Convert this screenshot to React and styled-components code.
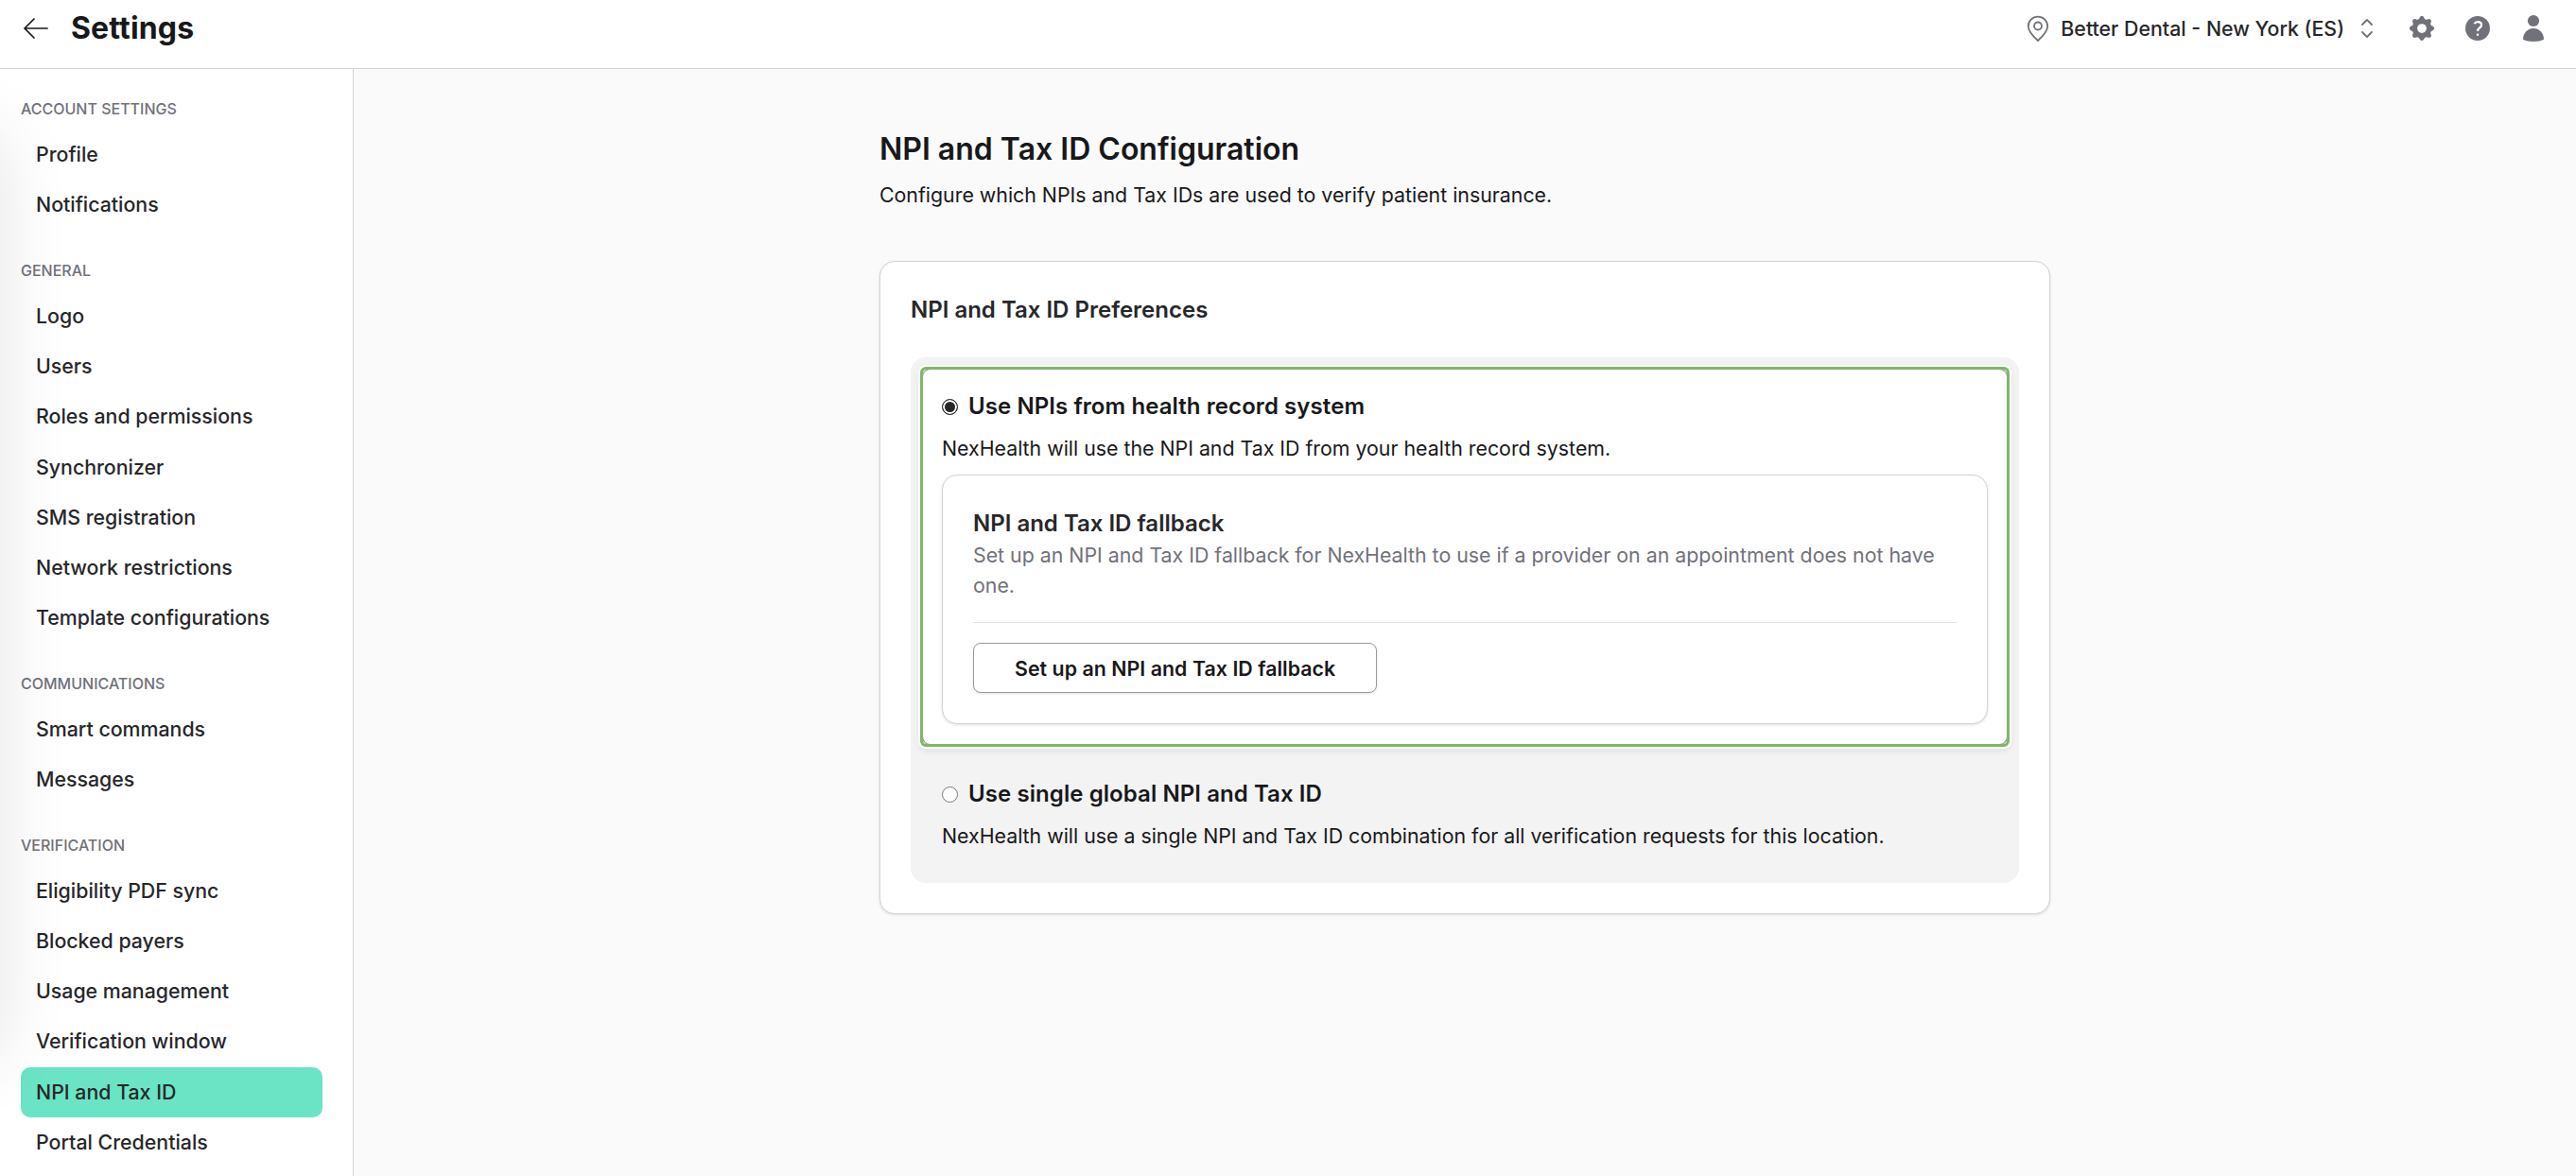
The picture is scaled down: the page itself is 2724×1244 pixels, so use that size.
import React from 'react';
import styled, { createGlobalStyle, css } from 'styled-components';

const colors = {
  ink: '#18181a',
  text: '#27272a',
  muted: '#71717a',
  line: '#d4d4d6',
  pageBg: '#fafafa',
  panelBg: '#f3f3f3',
  mint: '#6ae4c5',
  focus: '#82b46e',
};

const GlobalStyle = createGlobalStyle`
  * {
    box-sizing: border-box;
  }

  body {
    margin: 0;
    background: ${colors.pageBg};
    color: ${colors.ink};
    font-family: Inter, 'Liberation Sans', sans-serif;
  }

  h1, h2, h3, p {
    margin: 0;
  }
`;

const Page = styled.div`
  position: relative;
  display: flex;
  flex-direction: column;
  height: 1244px;
  overflow: hidden;
  background: ${colors.pageBg};

  /* soft shadow cast over the left edge of the sidebar */
  &::before {
    content: '';
    position: absolute;
    top: 140px;
    bottom: 125px;
    left: -200px;
    width: 200px;
    box-shadow: 0 0 76px rgba(0, 0, 0, 0.11);
    pointer-events: none;
    z-index: 1;
  }
`;

const Header = styled.header`
  display: flex;
  justify-content: space-between;
  align-items: center;
  flex: none;
  height: 73px;
  padding: 0 32px 12px 25px;
  background: white;
  border-bottom: 1px solid ${colors.line};
`;

const HeaderSide = styled.div`
  display: flex;
  align-items: center;
`;

const Title = styled.h1`
  margin-left: 24px;
  font-size: 32px;
  line-height: 40px;
  font-weight: 700;
  letter-spacing: 0.15px;
`;

const Location = styled.div`
  display: flex;
  align-items: center;
  margin-right: 38px;
  color: ${colors.muted};
`;

const LocationName = styled.span`
  margin: 0 17px 0 12px;
  color: ${colors.text};
  font-size: 21.33px;
  line-height: 32px;
  font-weight: 500;
`;

const Actions = styled.div`
  display: flex;
  align-items: center;
  gap: 33px;
  color: ${colors.muted};
`;

const Body = styled.div`
  display: flex;
  flex: 1;
  min-height: 0;
`;

const Sidebar = styled.nav`
  width: 374px;
  flex: none;
  padding: 26px 32px 0 22px;
  background: white;
  border-right: 1px solid ${colors.line};
`;

const Group = styled.section`
  margin-bottom: 26.2px;
`;

const GroupTitle = styled.h2`
  height: 38.2px;
  color: ${colors.muted};
  font-size: 16px;
  line-height: 32px;
  font-weight: 500;
  text-transform: uppercase;
`;

const Item = styled.div`
  height: 53.22px;
  padding: 0 16px;
  border-radius: 10px;
  color: ${colors.text};
  font-size: 21.33px;
  line-height: 52px;
  font-weight: 500;

  ${({ $active }) => $active && css`
    background: ${colors.mint};
  `}
`;

const Main = styled.main`
  flex: 1;
  display: flex;
  justify-content: center;
  padding-top: 64px;
`;

const Content = styled.div`
  width: 1238px;
`;

const PageTitle = styled.h2`
  font-size: 32px;
  line-height: 41px;
  font-weight: 600;
`;

const Text = styled.p`
  font-size: 21.33px;
  line-height: 32px;
`;

const Intro = styled(Text)`
  margin: 12px 0 54px;
`;

const Card = styled.section`
  padding: 32px;
  background: white;
  border: 1px solid ${colors.line};
  border-radius: 16px;
  box-shadow: 0 1px 3px rgba(0, 0, 0, 0.12);
`;

const CardTitle = styled.h3`
  margin-bottom: -2px;
  font-size: 24px;
  line-height: 38px;
  font-weight: 600;
  color: ${colors.text};
`;

const Options = styled.div`
  margin-top: 33px;
  padding: 10px;
  background: ${colors.panelBg};
  border-radius: 16px;
`;

const FocusRing = styled.div`
  overflow: hidden;
  border: 3px solid ${colors.focus};
  border-radius: 6px;
  background: #d5e5cd;
  box-shadow: 0 0 0 2px white, 0 3px 8px 1px rgba(0, 0, 0, 0.08);
`;

const Option = styled.div`
  padding: 33px 23px 24px;

  ${({ $selected }) => $selected && css`
    padding: 22px 20px 21px;
    border-radius: 8px;
    background: white;
    box-shadow: 0 0 0 1px #98989c;
  `}
`;

const OptionLabel = styled.label`
  display: flex;
  align-items: center;
  gap: 11px;
  margin-bottom: 11px;
  font-size: 24px;
  line-height: 34px;
  font-weight: 600;
  letter-spacing: 0.08px;
`;

const Radio = styled.span`
  width: 17px;
  height: 17px;
  border: 1px solid ${({ $checked }) => ($checked ? colors.text : '#767676')};
  border-radius: 50%;
  background: ${({ $checked }) => ($checked ? colors.text : 'white')};
  box-shadow: ${({ $checked }) => ($checked ? 'inset 0 0 0 2px white' : 'none')};
`;

const Fallback = styled(Card)`
  margin-top: 12px;
`;

const FallbackText = styled(Text)`
  color: ${colors.muted};
`;

const Divider = styled.hr`
  margin: 23px 0 21px;
  border: 0;
  border-top: 1px solid #e4e4e7;
`;

const Button = styled.button`
  display: block;
  height: 53px;
  padding: 0 43px;
  border: 1px solid #9a9aa3;
  border-radius: 8px;
  background: white;
  color: ${colors.ink};
  box-shadow: 0 1px 3px rgba(0, 0, 0, 0.12);
  font: 600 21.33px Inter, sans-serif;
  letter-spacing: 0.05px;
`;

// sidebar navigation, grouped as it is listed
const groups = [
  { title: 'Account settings', items: ['Profile', 'Notifications'] },
  {
    title: 'General',
    items: [
      'Logo',
      'Users',
      'Roles and permissions',
      'Synchronizer',
      'SMS registration',
      'Network restrictions',
      'Template configurations',
    ],
  },
  { title: 'Communications', items: ['Smart commands', 'Messages'] },
  {
    title: 'Verification',
    items: [
      'Eligibility PDF sync',
      'Blocked payers',
      'Usage management',
      'Verification window',
      'NPI and Tax ID',
      'Portal Credentials',
    ],
  },
];

const BackIcon = () => (
  <svg width="26" height="24" viewBox="0 0 26 24" fill="none" stroke={colors.ink} strokeWidth="1.7" strokeLinecap="round" strokeLinejoin="round">
    <path d="M25 12H1M11 2 1 12l10 10" />
  </svg>
);

const PinIcon = () => (
  <svg width="24" height="28" viewBox="0 0 24 28" fill="none" stroke="currentColor" strokeWidth="1.8" strokeLinejoin="round">
    <path d="M12 27C7 22.500 1.800 17.500 1.800 11.800a10.200 10.200 0 0 1 20.400 0C22.200 17.500 17 22.500 12 27Z" />
    <circle cx="12" cy="11.500" r="4" />
  </svg>
);

const SelectorIcon = () => (
  <svg width="14" height="22" viewBox="0 0 14 22" fill="none" stroke="currentColor" strokeWidth="1.8" strokeLinecap="round" strokeLinejoin="round">
    <path d="m2 7 5-5 5 5M2 15l5 5 5-5" />
  </svg>
);

const GearIcon = () => (
  <svg width="26" height="26" viewBox="2 2 16 16" fill="currentColor">
    <path fillRule="evenodd" clipRule="evenodd" d="M11.490 3.170c-.38-1.560-2.600-1.560-2.980 0a1.532 1.532 0 0 1-2.286.948c-1.372-.836-2.942.734-2.106 2.106.54.886.061 2.042-.947 2.287-1.561.379-1.561 2.600 0 2.978a1.532 1.532 0 0 1 .947 2.287c-.836 1.372.734 2.942 2.106 2.106a1.532 1.532 0 0 1 2.287.947c.379 1.561 2.600 1.561 2.978 0a1.533 1.533 0 0 1 2.287-.947c1.372.836 2.942-.734 2.106-2.106a1.533 1.533 0 0 1 .947-2.287c1.561-.379 1.561-2.600 0-2.978a1.532 1.532 0 0 1-.947-2.287c.836-1.372-.734-2.942-2.106-2.106a1.532 1.532 0 0 1-2.287-.947ZM10 13a3 3 0 1 0 0-6 3 3 0 0 0 0 6Z" />
  </svg>
);

const HelpIcon = () => (
  <svg width="26" height="26" viewBox="0 0 26 26">
    <circle cx="13" cy="13" r="13" fill="currentColor" />
    <path d="M9.500 8.200c.8-1.400 2.100-2 3.600-2 2.300 0 3.900 1.300 3.900 3.200 0 3.200-4 3-4 6.600" fill="none" stroke="white" strokeWidth="2.200" />
    <rect x="11.900" y="18.600" width="2.200" height="2.200" fill="white" />
  </svg>
);

const UserIcon = () => (
  <svg width="26" height="30" viewBox="0 0 26 30" fill="currentColor">
    <circle cx="13" cy="7" r="6.100" />
    <path d="M2 26.800c0-7 5-11.800 11-11.800s11 4.800 11 11.800c-6 2.900-16 2.900-22 0Z" />
  </svg>
);

function App() {
  return (
    <Page>
      <GlobalStyle />
      <Header>
        <HeaderSide>
          <BackIcon />
          <Title>Settings</Title>
        </HeaderSide>
        <HeaderSide>
          <Location>
            <PinIcon />
            <LocationName>Better Dental - New York (ES)</LocationName>
            <SelectorIcon />
          </Location>
          <Actions>
            <GearIcon />
            <HelpIcon />
            <UserIcon />
          </Actions>
        </HeaderSide>
      </Header>
      <Body>
        <Sidebar>
          {groups.map((group) => (
            <Group key={group.title}>
              <GroupTitle>{group.title}</GroupTitle>
              {group.items.map((item) => (
                <Item key={item} $active={item === 'NPI and Tax ID'}>{item}</Item>
              ))}
            </Group>
          ))}
        </Sidebar>
        <Main>
          <Content>
            <PageTitle>NPI and Tax ID Configuration</PageTitle>
            <Intro>Configure which NPIs and Tax IDs are used to verify patient insurance.</Intro>
            <Card>
              <CardTitle>NPI and Tax ID Preferences</CardTitle>
              <Options>
                <FocusRing>
                  <Option $selected>
                    <OptionLabel>
                      <Radio $checked />
                      Use NPIs from health record system
                    </OptionLabel>
                    <Text>NexHealth will use the NPI and Tax ID from your health record system.</Text>
                    <Fallback>
                      <CardTitle>NPI and Tax ID fallback</CardTitle>
                      <FallbackText>
                        Set up an NPI and Tax ID fallback for NexHealth to use if a provider on an appointment does not have one.
                      </FallbackText>
                      <Divider />
                      <Button>Set up an NPI and Tax ID fallback</Button>
                    </Fallback>
                  </Option>
                </FocusRing>
                <Option>
                  <OptionLabel>
                    <Radio />
                    Use single global NPI and Tax ID
                  </OptionLabel>
                  <Text>NexHealth will use a single NPI and Tax ID combination for all verification requests for this location.</Text>
                </Option>
              </Options>
            </Card>
          </Content>
        </Main>
      </Body>
    </Page>
  );
}

export default App;
